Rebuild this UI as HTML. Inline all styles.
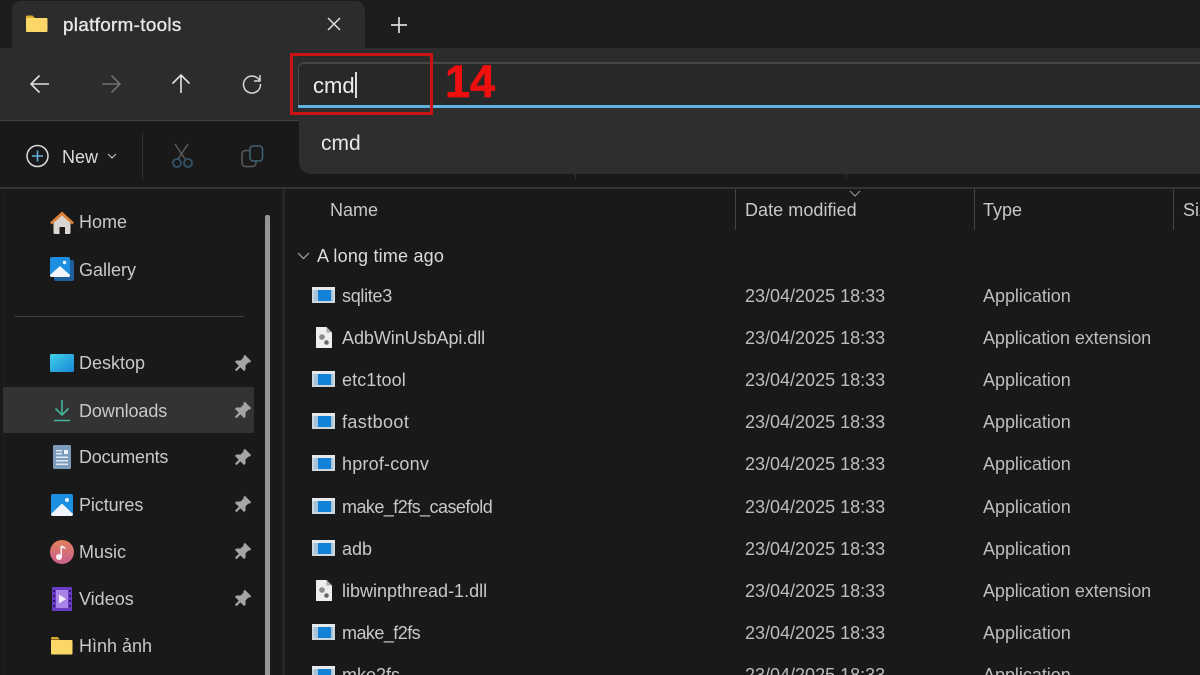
<!DOCTYPE html>
<html><head><meta charset="utf-8"><style>
html,body{margin:0;padding:0;width:1200px;height:675px;overflow:hidden}
body{position:relative;background:#191919;font-family:"Liberation Sans","DejaVu Sans",sans-serif;color:#dcdcdc;font-size:18px}
#w{position:absolute;left:0;top:0;width:1200px;height:675px;overflow:hidden;filter:blur(.35px)}
.a{position:absolute}
.t{position:absolute;white-space:nowrap;line-height:22px;height:22px}
svg{position:absolute;overflow:visible}
.g{color:#c8c8c8}
.e{position:absolute;left:312px;width:23px;height:16px;background:#cdd6dd;box-sizing:border-box;border-top:3px solid #e6e9ec}
.e:before{content:"";position:absolute;left:2px;top:0;width:19px;height:11px;background:#a7c4da}
.e:after{content:"";position:absolute;left:6px;top:0;width:13px;height:11px;background:#1282d6}
.f{position:absolute;left:316px}.n{left:342px}.d{left:745px;color:#bdbdbd}.y{left:983px;color:#bdbdbd;letter-spacing:-.03px}
</style></head><body><div id="w">
<div class="a" style="left:0;top:0;width:1200px;height:48px;background:#1c1c1c"></div>
<div class="a" style="left:12px;top:1px;width:353px;height:47px;background:#2c2c2c;border-radius:9px 9px 0 0"></div>
<div class="a" style="left:0;top:48px;width:1200px;height:72px;background:#2c2c2c"></div>
<div class="a" style="left:0;top:120px;width:1200px;height:1px;background:#414141"></div>
<div class="a" style="left:0;top:121px;width:1200px;height:66px;background:#191919"></div>
<div class="a" style="left:0;top:187px;width:1200px;height:2px;background:#333"></div>

<svg style="left:26px;top:15px" width="22" height="18" viewBox="0 0 22 18"><path d="M0 2q0-1.500 1.500-1.500h5l2.500 2.500h-9z" fill="#e0ad2c"/><path d="M0 3h20.500q1 0 1 1v12q0 1-1 1H1q-1 0-1-1z" fill="#fbd768"/></svg>
<div class="t" style="left:63px;top:14px;font-size:18.800px;color:#e8e8e8;-webkit-text-stroke:.35px #e8e8e8;letter-spacing:.35px">platform-tools</div>
<svg style="left:327px;top:17px" width="14" height="14"><path d="M1 1l12 12M13 1L1 13" stroke="#e0e0e0" stroke-width="1.500"/></svg>
<svg style="left:391px;top:17px" width="16" height="16"><path d="M8 0v16M0 8h16" stroke="#dcdcdc" stroke-width="1.700"/></svg>

<svg style="left:30px;top:74px" width="20" height="20" fill="none" stroke="#e0e0e0" stroke-width="1.600"><path d="M1 10h18M9.500 1.500L1 10l8.500 8.500"/></svg>
<svg style="left:101px;top:74px" width="20" height="20" fill="none" stroke="#707070" stroke-width="1.600"><path d="M1 10h18M10.500 1.500L19 10l-8.500 8.500"/></svg>
<svg style="left:171px;top:74px" width="20" height="20" fill="none" stroke="#e0e0e0" stroke-width="1.600"><path d="M10 19V1M1.500 9.500L10 1l8.500 8.500"/></svg>
<svg style="left:242px;top:74px" width="20" height="20" fill="none" stroke="#d8d8d8" stroke-width="1.500"><path d="M17.500 6.500A8.500 8.500 0 1 0 18.500 10"/><path d="M18 1v6h-6"/></svg>

<div class="a" style="left:298px;top:62px;width:902px;height:43px;background:#282828;border-top:2px solid #464646;border-left:1px solid #4a4a4a;border-radius:6px 0 0 0;box-sizing:border-box"></div>
<div class="a" style="left:298px;top:105px;width:902px;height:3px;background:#5fb2e0"></div>
<div class="t" style="left:313px;top:75px;font-size:22px;color:#eee">cmd</div>
<div class="a" style="left:355px;top:72px;width:2px;height:26px;background:#ddd"></div>
<div class="a" style="left:299px;top:108px;width:901px;height:66px;background:#2e2e2e;border-radius:0 0 0 12px"></div>
<div class="t" style="left:321px;top:133px;font-size:21px;color:#e6e6e6">cmd</div>
<div class="a" style="left:290px;top:53px;width:143px;height:62px;box-sizing:border-box;border:3.500px solid #c81414"></div>
<div class="t" style="left:445px;top:59px;font-size:45px;line-height:46px;height:46px;font-weight:700;color:#ee0f0f;-webkit-text-stroke:.7px #ee0f0f">14</div>

<svg style="left:26px;top:144px" width="24" height="24" fill="none"><circle cx="11.500" cy="12" r="10.500" stroke="#dcdcdc" stroke-width="1.500"/><path d="M11.500 6.500v11M6 12h11" stroke="#62b1dc" stroke-width="1.600"/></svg>
<div class="t" style="left:62px;top:146px">New</div>
<svg style="left:107px;top:153px" width="10" height="6" fill="none" stroke="#ccc" stroke-width="1.100"><path d="M1 1l4 4 4-4"/></svg>
<div class="a" style="left:142px;top:133px;width:1px;height:46px;background:#333"></div>
<svg style="left:170px;top:144px" width="22" height="24" fill="none" stroke-width="1.400"><path d="M5 0l10 15M18 0L8 15" stroke="#5e5e5e"/><circle cx="7" cy="19" r="4" stroke="#33536a" stroke-width="1.800"/><circle cx="18" cy="19" r="4" stroke="#33536a" stroke-width="1.800"/></svg>
<svg style="left:241px;top:145px" width="23" height="23" fill="none" stroke-width="1.500"><rect x="1" y="5.500" width="14" height="16" rx="3.500" stroke="#5a5a5a"/><rect x="9" y="1" width="12.500" height="15" rx="3" fill="#191919" stroke="#3f6478"/></svg>
<div class="a" style="left:575px;top:174px;width:1px;height:5px;background:#2e2e2e"></div>
<div class="a" style="left:846px;top:174px;width:1px;height:5px;background:#2e2e2e"></div>

<div class="a" style="left:282px;top:189px;width:3px;height:486px;background:#272727"></div>
<div class="a" style="left:3px;top:189px;width:1px;height:486px;background:#222"></div>
<div class="a" style="left:265px;top:215px;width:5px;height:460px;background:#969696;border-radius:2px 2px 0 0"></div>
<div class="a" style="left:3px;top:387px;width:251px;height:46px;background:#333;border-radius:2px"></div>
<div class="a" style="left:15px;top:316px;width:229px;height:1px;background:#444"></div>

<svg style="left:50px;top:211px" width="24" height="23"><path d="M3.500 10L12 3l8.500 7v11.500q0 1.500-1.500 1.500h-4v-7H9.500v7H5q-1.500 0-1.500-1.500z" fill="#d9d5d0"/><path d="M12 0.500L0 11.500l1.800 2L12 4.500l10.200 9 1.800-2z" fill="#dd8238"/></svg>
<div class="t g" style="left:79px;top:211px">Home</div>
<svg style="left:50px;top:257px" width="24" height="24"><rect x="4" y="3" width="20" height="21" rx="2" fill="#1f5f9e"/><rect x="0" y="0" width="20" height="20" rx="2" fill="#1c8fe0"/><path d="M0 18L10 9l10 9v.500q0 1.500-2 1.500H2q-2 0-2-1.500z" fill="#f2f6fa"/><circle cx="14.500" cy="5.500" r="1.700" fill="#e4f2fc"/></svg>
<div class="t g" style="left:79px;top:259px">Gallery</div>
<svg style="left:50px;top:354px" width="24" height="19"><defs><linearGradient id="d" x1="0" y1="0" x2="1" y2="1"><stop offset="0" stop-color="#3fd0e8"/><stop offset="1" stop-color="#1a86d8"/></linearGradient></defs><rect width="24" height="18" rx="1.500" fill="url(#d)"/></svg>
<div class="t g" style="left:79px;top:352px">Desktop</div>
<svg style="left:53px;top:399px" width="18" height="23" fill="none" stroke="#43b59c" stroke-width="1.600"><path d="M9 1v15M2.500 9.500L9 16l6.500-6.500M1 21.500h16"/></svg>
<div class="t g" style="left:79px;top:400px;letter-spacing:-.1px">Downloads</div>
<svg style="left:53px;top:445px" width="18" height="24"><rect width="18" height="24" rx="1.500" fill="#7d9cbc"/><path d="M3 5h6v1.500H3zM3 8h6v1.500H3zM3 11.500h12V13H3zM3 15h12v1.500H3zM3 18.500h12V20H3z" fill="#dfe8f1"/><rect x="11" y="5" width="4" height="4" fill="#eef3f8"/></svg>
<div class="t g" style="left:79px;top:446px;letter-spacing:-.2px">Documents</div>
<svg style="left:51px;top:494px" width="22" height="22"><rect width="22" height="22" rx="2" fill="#1c8fe0"/><path d="M0 20L11 9.500 22 20v0q0 2-2 2H2q-2 0-2-2z" fill="#f2f6fa"/><circle cx="16" cy="6" r="2" fill="#e4f2fc"/></svg>
<div class="t g" style="left:79px;top:494px;letter-spacing:-.1px">Pictures</div>
<svg style="left:50px;top:540px" width="24" height="24"><defs><linearGradient id="m" x1="0" y1="0" x2="0" y2="1"><stop offset="0" stop-color="#e2805e"/><stop offset="1" stop-color="#c9608f"/></linearGradient></defs><circle cx="12" cy="12" r="12" fill="url(#m)"/><circle cx="9" cy="17" r="3" fill="#f6eef0"/><path d="M10.500 17V5.500c3 .3 5 1.500 5.500 4-1.500-1-3-1.500-4-1.500V17z" fill="#f6eef0"/></svg>
<div class="t g" style="left:79px;top:541px">Music</div>
<svg style="left:52px;top:587px" width="20" height="24"><rect width="20" height="24" rx="1.500" fill="#6a3bc4"/><rect x="4" y="3" width="12" height="18" fill="#a884e8"/><path d="M7 7.500l7 4.500-7 4.500z" fill="#f2ecfc"/><path d="M1 3h2v2H1zM1 8h2v2H1zM1 13h2v2H1zM1 18h2v2H1zM17 3h2v2h-2zM17 8h2v2h-2zM17 13h2v2h-2zM17 18h2v2h-2z" fill="#2b1a66"/></svg>
<div class="t g" style="left:79px;top:588px">Videos</div>
<svg style="left:51px;top:637px" width="22" height="18"><path d="M0 1.500Q0 0 1.500 0h5l2.500 2.500H0z" fill="#e0ad2c"/><path d="M0 3h20.500q1 0 1 1v12.500q0 1-1 1H1q-1 0-1-1z" fill="#fbd768"/></svg>
<div class="t g" style="left:79px;top:635px">Hình ảnh</div>

<svg width="0" height="0"><defs><g id="pin" transform="rotate(45 8 8)"><path d="M3.500 -.5h9v2l-1 .8v4.200l3 3v2H1.500v-2l3-3V2.300l-1-.8z" fill="#a5a5a5"/><rect x="7" y="11" width="2.200" height="6" fill="#a5a5a5"/></g></defs></svg>
<svg style="left:234px;top:356px" width="16" height="16"><use href="#pin"/></svg>
<svg style="left:234px;top:403px" width="16" height="16"><use href="#pin"/></svg>
<svg style="left:234px;top:450px" width="16" height="16"><use href="#pin"/></svg>
<svg style="left:234px;top:497px" width="16" height="16"><use href="#pin"/></svg>
<svg style="left:234px;top:544px" width="16" height="16"><use href="#pin"/></svg>
<svg style="left:234px;top:591px" width="16" height="16"><use href="#pin"/></svg>

<div class="t g" style="left:330px;top:199px">Name</div>
<div class="t g" style="left:745px;top:199px;letter-spacing:.05px">Date modified</div>
<div class="t g" style="left:983px;top:199px">Type</div>
<div class="t g" style="left:1183px;top:199px">Size</div>
<div class="a" style="left:735px;top:189px;width:1px;height:41px;background:#444"></div>
<div class="a" style="left:974px;top:189px;width:1px;height:41px;background:#444"></div>
<div class="a" style="left:1173px;top:189px;width:1px;height:41px;background:#444"></div>
<svg style="left:849px;top:190px" width="12" height="7" fill="none" stroke="#999" stroke-width="1"><path d="M1 1l5 5 5-5"/></svg>
<svg style="left:297px;top:252px" width="13" height="8" fill="none" stroke="#aaa" stroke-width="1.200"><path d="M1 1l5.500 5.500L12 1"/></svg>
<div class="t" style="left:317px;top:245px;letter-spacing:.2px">A long time ago</div>

<div class="e" style="top:287px"></div><div class="t n g" style="top:285px;letter-spacing:-.3px">sqlite3</div><div class="t d" style="top:285px">23/04/2025 18:33</div><div class="t y" style="top:285px">Application</div>
<svg class="f" style="top:327px" width="16" height="21"><path d="M0 0h10.500L16 5.500V21H0z" fill="#eeeeee"/><path d="M10.500 0v5.500H16z" fill="#aaa"/><circle cx="6" cy="10" r="2.800" fill="#8a8a8a"/><circle cx="10.500" cy="15.500" r="2.300" fill="#666"/></svg><div class="t n g" style="top:327px;letter-spacing:-.06px">AdbWinUsbApi.dll</div><div class="t d" style="top:327px">23/04/2025 18:33</div><div class="t y" style="top:327px;letter-spacing:-.1px">Application extension</div>
<div class="e" style="top:371px"></div><div class="t n g" style="top:369px;letter-spacing:.1px">etc1tool</div><div class="t d" style="top:369px">23/04/2025 18:33</div><div class="t y" style="top:369px">Application</div>
<div class="e" style="top:413px"></div><div class="t n g" style="top:411px;letter-spacing:.4px">fastboot</div><div class="t d" style="top:411px">23/04/2025 18:33</div><div class="t y" style="top:411px">Application</div>
<div class="e" style="top:455px"></div><div class="t n g" style="top:453px;letter-spacing:.2px">hprof-conv</div><div class="t d" style="top:453px">23/04/2025 18:33</div><div class="t y" style="top:453px">Application</div>
<div class="e" style="top:498px"></div><div class="t n g" style="top:496px;letter-spacing:-.55px">make_f2fs_casefold</div><div class="t d" style="top:496px">23/04/2025 18:33</div><div class="t y" style="top:496px">Application</div>
<div class="e" style="top:540px"></div><div class="t n g" style="top:538px">adb</div><div class="t d" style="top:538px">23/04/2025 18:33</div><div class="t y" style="top:538px">Application</div>
<svg class="f" style="top:580px" width="16" height="21"><path d="M0 0h10.500L16 5.500V21H0z" fill="#eeeeee"/><path d="M10.500 0v5.500H16z" fill="#aaa"/><circle cx="6" cy="10" r="2.800" fill="#8a8a8a"/><circle cx="10.500" cy="15.500" r="2.300" fill="#666"/></svg><div class="t n g" style="top:580px">libwinpthread-1.dll</div><div class="t d" style="top:580px">23/04/2025 18:33</div><div class="t y" style="top:580px;letter-spacing:-.1px">Application extension</div>
<div class="e" style="top:624px"></div><div class="t n g" style="top:622px;letter-spacing:-.55px">make_f2fs</div><div class="t d" style="top:622px">23/04/2025 18:33</div><div class="t y" style="top:622px">Application</div>
<div class="e" style="top:666px"></div><div class="t n g" style="top:664px">mke2fs</div><div class="t d" style="top:664px">23/04/2025 18:33</div><div class="t y" style="top:664px">Application</div>
</div></body></html>
